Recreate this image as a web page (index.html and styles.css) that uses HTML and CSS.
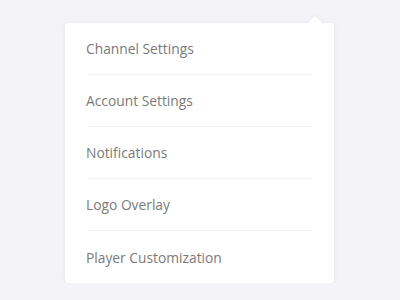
FILE: index.html
```html
<!DOCTYPE html>
<html lang="en">
<head>
  <meta charset="UTF-8" />
  <title>Settings Menu</title>
  <link rel="stylesheet" href="styles.css">
</head>
<body>
  <div class="menu">
    <ul>
      <li><a href="#">Channel Settings</a></li>
      <li><a href="#">Account Settings</a></li>
      <li><a href="#">Notifications</a></li>
      <li><a href="#">Logo Overlay</a></li>
      <li><a href="#">Player Customization</a></li>
    </ul>
  </div>
</body>
</html>
```

FILE: styles.css
```css
body {
  background-color: #f4f4f8;
  font-family: "Open Sans", sans-serif;
  margin: 0;
  padding: 23px 0 0 65px;
}

.menu {
  position: relative;
  width: 269px;
  background: white;
  border-radius: 3px;
  box-shadow: 0 1px 4px rgba(0,0,0,0.08);
}

.menu::before {
  content: "";
  position: absolute;
  top: -5px;
  right: 13px;
  width: 12px;
  height: 12px;
  background: white;
  border-radius: 3px 0 0 0;
  transform: rotate(45deg);
  box-shadow: -1px -1px 3px rgba(0,0,0,0.04);
}

ul {
  position: relative;
  list-style: none;
  margin: 0;
  padding: 0 22px;
}

li {
  height: 52px;
  border-bottom: 1px solid #f2f2f4;
  box-sizing: border-box;
}

li:last-child {
  border-bottom: none;
}

li a {
  display: flex;
  align-items: center;
  height: 100%;
  margin-left: -1px;
  color: #7a7a7a;
  font-size: 13.8px;
  text-decoration: none;
}
```
